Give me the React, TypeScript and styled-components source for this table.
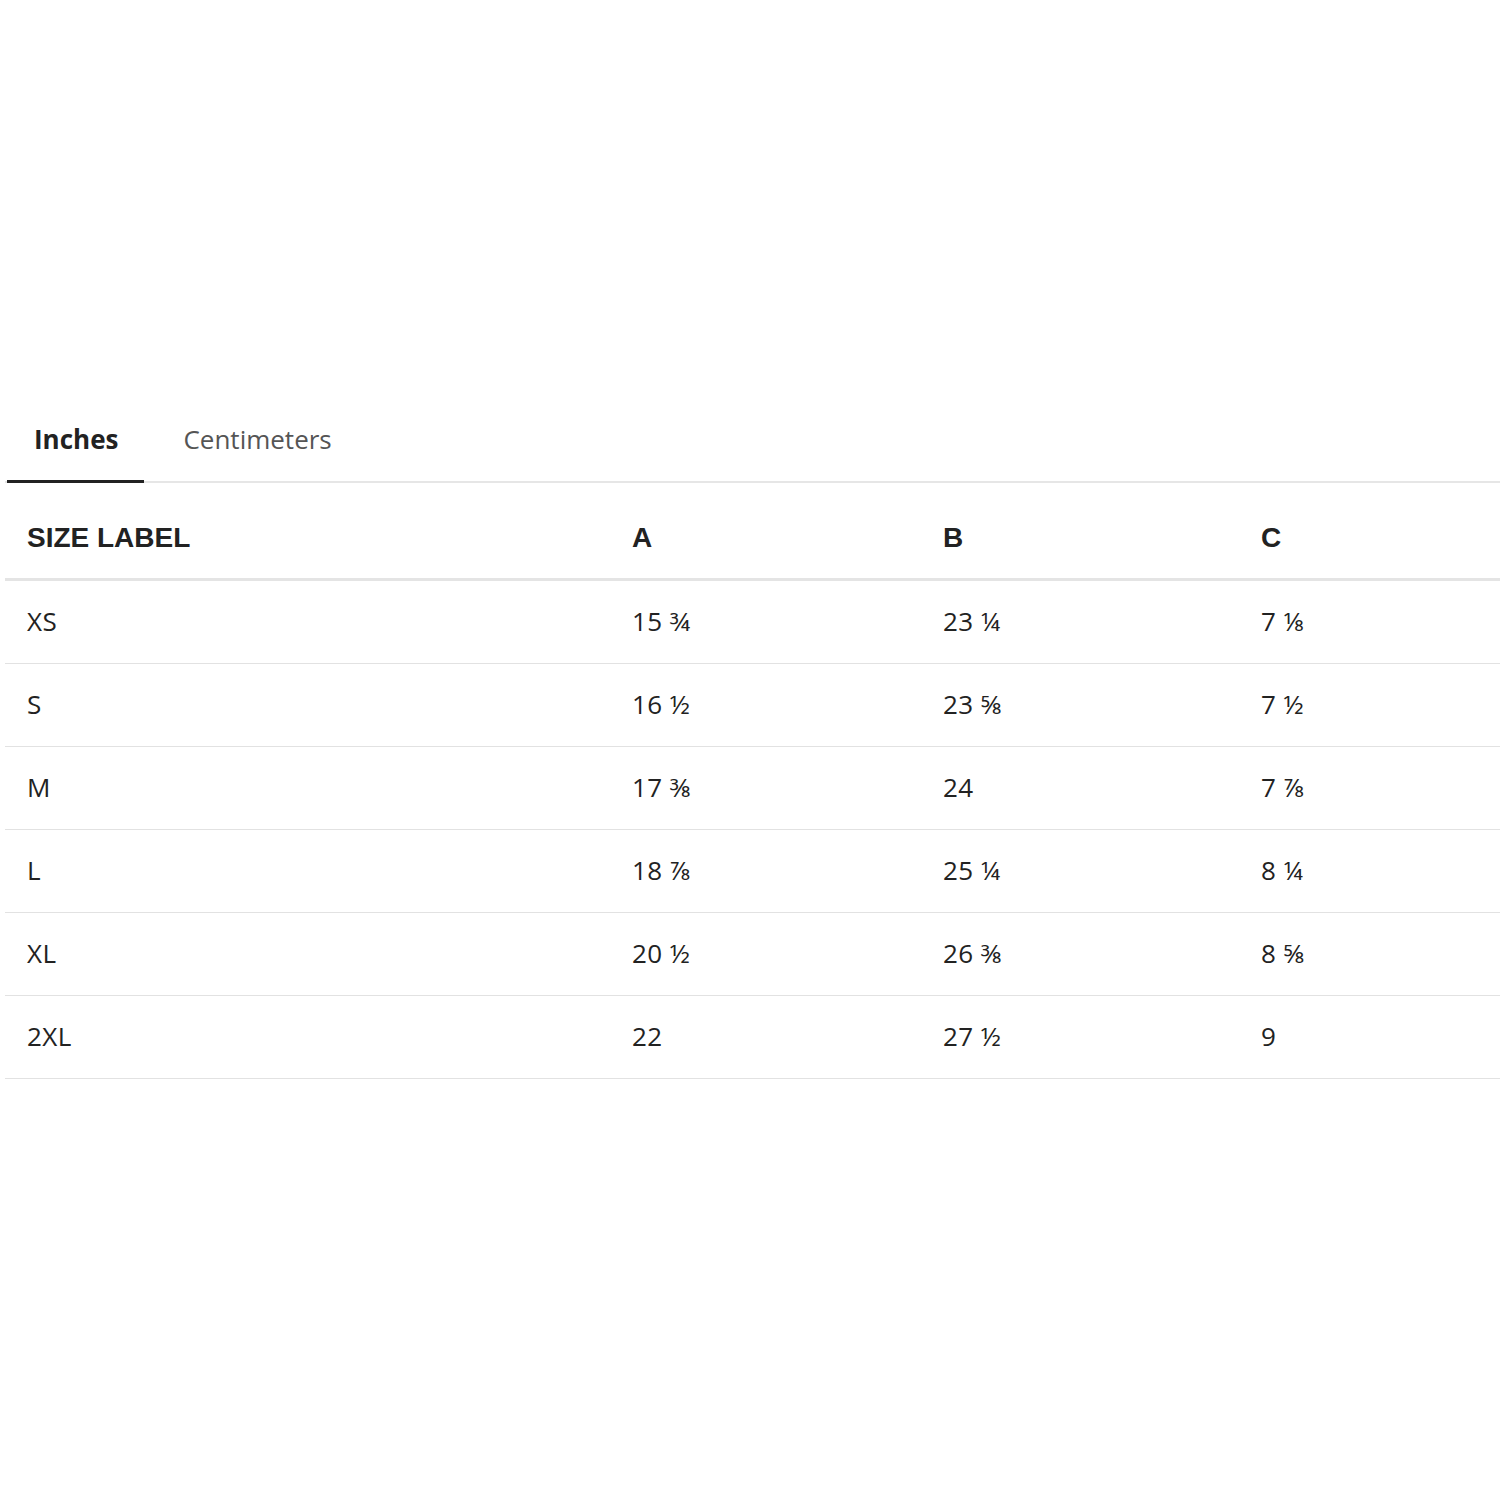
import React, { useState } from "react";
import styled, { createGlobalStyle } from "styled-components";

const Global = createGlobalStyle`
  html, body { margin: 0; padding: 0; background: #fff; }
  body { font-family: "Open Sans", Lato, "Noto Sans", sans-serif; color: #222; }
`;

const Page = styled.div`
  padding: 400px 0 0 5px;
  width: 1495px;
`;

const TabBar = styled.div`
  display: flex;
  border-bottom: 2px solid #e6e6e6;
  padding-left: 2px;
`;

const Tab = styled.button<{ $active?: boolean }>`
  font-family: inherit;
  font-size: 26px;
  line-height: 32px;
  background: none;
  border: none;
  cursor: pointer;
  padding: 23px 26px 25px 27px;
  margin-right: 12px;
  margin-bottom: -2px;
  font-weight: ${(p) => (p.$active ? 700 : 400)};
  color: ${(p) => (p.$active ? "#222" : "#555")};
  border-bottom: 3px solid ${(p) => (p.$active ? "#222" : "transparent")};
`;

const Table = styled.table`
  width: 100%;
  border-collapse: collapse;
  table-layout: fixed;
`;

const Th = styled.th<{ $w: number }>`
  box-sizing: border-box;
  width: ${(p) => p.$w}px;
  text-align: left;
  font-family: "Liberation Sans", Arial, sans-serif;
  font-size: 28px;
  font-weight: 700;
  padding: 39px 22px 24px;
  line-height: 32px;
  border-bottom: 3px solid #e4e4e4;
  color: #222;
`;

const Td = styled.td`
  font-size: 26px;
  letter-spacing: 0.4px;
  line-height: 32px;
  padding: 24px 22px 26px;
  border-bottom: 1px solid #e2e2e2;
  color: #222;
`;

const rows = [
  ["XS", "15 ¾", "23 ¼", "7 ⅛"],
  ["S", "16 ½", "23 ⅝", "7 ½"],
  ["M", "17 ⅜", "24", "7 ⅞"],
  ["L", "18 ⅞", "25 ¼", "8 ¼"],
  ["XL", "20 ½", "26 ⅜", "8 ⅝"],
  ["2XL", "22", "27 ½", "9"],
];

export default function App() {
  const [tab, setTab] = useState(0);
  return (
    <Page>
      <Global />
      <TabBar>
        <Tab $active={tab === 0} onClick={() => setTab(0)}>Inches</Tab>
        <Tab $active={tab === 1} onClick={() => setTab(1)}>Centimeters</Tab>
      </TabBar>
      <Table>
        <thead>
          <tr>
            <Th $w={605}>SIZE LABEL</Th>
            <Th $w={311}>A</Th>
            <Th $w={318}>B</Th>
            <Th $w={261}>C</Th>
          </tr>
        </thead>
        <tbody>
          {rows.map((r) => (
            <tr key={r[0]}>
              {r.map((c, i) => (
                <Td key={i}>{c}</Td>
              ))}
            </tr>
          ))}
        </tbody>
      </Table>
    </Page>
  );
}
